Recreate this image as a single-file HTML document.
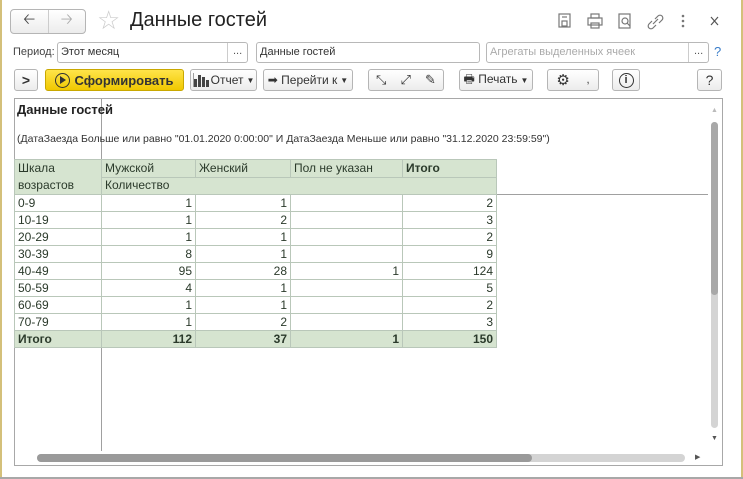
<!DOCTYPE html>
<html><head><meta charset="utf-8"><style>
*{box-sizing:border-box;margin:0;padding:0}
body{width:743px;height:479px;overflow:hidden;background:#fff;font-family:"Liberation Sans","DejaVu Sans",sans-serif;position:relative;color:#333}
.a{position:absolute}
.btn{position:absolute;height:22px;border:1px solid #b5b5b5;border-radius:3px;background:linear-gradient(#fff,#ececec);font-size:12px;color:#333;display:flex;align-items:center;justify-content:center;white-space:nowrap}
.inp{position:absolute;height:21px;border:1px solid #b8b8b8;border-radius:3px;background:#fff;font-size:11px;padding-left:3px;line-height:19px;color:#333}
table{border-collapse:collapse;position:absolute;left:14px;top:159px;font-size:12px}
td{border:1px solid #b9c7b9;height:17px;padding:0 3px;line-height:15px;color:#2b3a2b}
td.n{text-align:right}
.h td{background:#d6e4d0}
.t td{background:#d6e4d0;font-weight:bold}
</style></head><body>
<div class="a" style="left:0;top:0;width:2px;height:479px;background:#d4c07a"></div>
<div class="a" style="right:0;top:0;width:2px;height:479px;background:#d4c07a"></div>
<div class="a" style="left:0;top:477px;width:743px;height:2px;background:#a8a8a8"></div>

<div class="btn" style="left:10px;top:9px;width:76px;height:25px;border-radius:4px;justify-content:flex-start">
 <span style="width:37px;text-align:center;font-size:15px;color:#444">&#129120;</span>
 <span style="width:1px;height:23px;background:#ccc"></span>
 <span style="width:37px;text-align:center;font-size:15px;color:#aaa">&#129122;</span>
</div>
<div class="a" style="left:97px;top:5px;font-size:26px;color:#ccc">☆</div>
<div class="a" style="left:130px;top:9px;font-size:20px;color:#222">Данные гостей</div>
<svg class="a" style="left:555px;top:12px" width="180" height="18" fill="none" stroke="#777" stroke-width="1.2">
 <rect x="4" y="2" width="11" height="13"/><rect x="7" y="9" width="5" height="5"/><line x1="7" y1="5" x2="12" y2="5"/>
 <rect x="33" y="6" width="14" height="7"/><rect x="36" y="2" width="8" height="4"/><rect x="36" y="11" width="8" height="5"/>
 <rect x="64" y="2" width="11" height="14"/><circle cx="70" cy="9" r="3"/><line x1="72" y1="11" x2="75" y2="14"/>
 <path d="M97 9l-3 3a2.5 2.5 0 0 0 4 4l3-3M100 7l3-3a2.5 2.5 0 0 1 4 4l-3 3M98 12l5-5"/>
 <g fill="#777" stroke="none"><circle cx="128" cy="4" r="1.3"/><circle cx="128" cy="9" r="1.3"/><circle cx="128" cy="14" r="1.3"/></g>
 <path d="M156 5l7 8M163 5l-7 8" stroke="#555"/>
</svg>

<div class="a" style="left:13px;top:46px;font-size:11px;color:#444">Период:</div>
<div class="inp" style="left:57px;top:42px;width:191px">Этот месяц</div>
<div class="a" style="left:227px;top:43px;width:1px;height:19px;background:#ccc"></div>
<div class="a" style="left:233px;top:45px;font-size:11px;color:#555">...</div>
<div class="inp" style="left:256px;top:42px;width:224px">Данные гостей</div>
<div class="inp" style="left:486px;top:42px;width:223px;color:#aaa">Агрегаты выделенных ячеек</div>
<div class="a" style="left:688px;top:43px;width:1px;height:19px;background:#ccc"></div>
<div class="a" style="left:694px;top:45px;font-size:11px;color:#555">...</div>
<div class="a" style="left:714px;top:44px;font-size:13px;color:#3a7dc9">?</div>

<div class="btn" style="left:14px;top:69px;width:24px;font-weight:bold;font-size:14px">&gt;</div>
<div class="btn" style="left:45px;top:69px;width:139px;background:linear-gradient(#ffe44a,#f0c800);border-color:#c9a800;font-weight:bold;font-size:13px;color:#333">
 <span style="display:inline-block;width:15px;height:15px;border:1.5px solid #333;border-radius:50%;margin-right:4px;position:relative"><span style="position:absolute;left:4px;top:2.5px;border-left:6px solid #333;border-top:4px solid transparent;border-bottom:4px solid transparent"></span></span>Сформировать</div>
<div class="btn" style="left:190px;top:69px;width:67px"><svg width="18" height="14"><rect x="1" y="6" width="3" height="8" fill="#444"/><rect x="5" y="2" width="3" height="12" fill="#444"/><rect x="9" y="4" width="3" height="10" fill="#444"/><rect x="13" y="7" width="3" height="7" fill="#444"/><line x1="0" y1="0" x2="0" y2="14" stroke="#444"/></svg>Отчет <span style="font-size:8px;margin-left:3px">▼</span></div>
<div class="btn" style="left:263px;top:69px;width:90px">➡ Перейти к <span style="font-size:8px;margin-left:3px">▼</span></div>
<div class="btn" style="left:368px;top:69px;width:76px;justify-content:space-around;font-size:13px"><span>⤡</span><span>⤢</span><span>✎</span></div>
<div class="btn" style="left:459px;top:69px;width:74px">🖶 Печать <span style="font-size:8px;margin-left:3px">▼</span></div>
<div class="btn" style="left:547px;top:69px;width:52px;justify-content:space-around;font-size:15px"><span>⚙</span><span style="font-size:11px">,</span></div>
<div class="btn" style="left:612px;top:69px;width:28px"><span style="display:inline-block;width:15px;height:15px;border:1.3px solid #333;border-radius:50%;font-size:11px;line-height:13px;text-align:center;font-weight:bold">i</span></div>
<div class="btn" style="left:697px;top:69px;width:25px;font-size:14px">?</div>

<div class="a" style="left:14px;top:98px;width:709px;height:368px;border:1px solid #a8a8a8"></div>
<div class="a" style="left:101px;top:99px;width:1px;height:352px;background:#a0a0a0"></div>
<div class="a" style="left:15px;top:194px;width:693px;height:1px;background:#a0a0a0"></div>
<div class="a" style="left:17px;top:102px;font-size:13px;font-weight:bold;color:#222">Данные гостей</div>
<div class="a" style="left:17px;top:133px;font-size:10.5px;color:#333">(ДатаЗаезда Больше или равно "01.01.2020 0:00:00" И ДатаЗаезда Меньше или равно "31.12.2020 23:59:59")</div>

<table>
<tr class="h"><td rowspan="2" style="width:87px;vertical-align:top;line-height:17px">Шкала<br>возрастов</td><td style="width:94px">Мужской</td><td style="width:95px">Женский</td><td style="width:112px">Пол не указан</td><td style="width:94px;font-weight:bold">Итого</td></tr>
<tr class="h"><td colspan="4">Количество</td></tr>
<tr><td>0-9</td><td class="n">1</td><td class="n">1</td><td></td><td class="n">2</td></tr>
<tr><td>10-19</td><td class="n">1</td><td class="n">2</td><td></td><td class="n">3</td></tr>
<tr><td>20-29</td><td class="n">1</td><td class="n">1</td><td></td><td class="n">2</td></tr>
<tr><td>30-39</td><td class="n">8</td><td class="n">1</td><td></td><td class="n">9</td></tr>
<tr><td>40-49</td><td class="n">95</td><td class="n">28</td><td class="n">1</td><td class="n">124</td></tr>
<tr><td>50-59</td><td class="n">4</td><td class="n">1</td><td></td><td class="n">5</td></tr>
<tr><td>60-69</td><td class="n">1</td><td class="n">1</td><td></td><td class="n">2</td></tr>
<tr><td>70-79</td><td class="n">1</td><td class="n">2</td><td></td><td class="n">3</td></tr>
<tr class="t"><td>Итого</td><td class="n">112</td><td class="n">37</td><td class="n">1</td><td class="n">150</td></tr>
</table>

<div class="a" style="left:711px;top:107px;font-size:7px;color:#bbb">▲</div>
<div class="a" style="left:711px;top:122px;width:7px;height:306px;border-radius:4px;background:#d4d4d4"></div>
<div class="a" style="left:711px;top:122px;width:7px;height:173px;border-radius:4px;background:#a8a8a8"></div>
<div class="a" style="left:711px;top:435px;font-size:7px;color:#555">▼</div>
<div class="a" style="left:37px;top:454px;width:648px;height:8px;border-radius:4px;background:#d4d4d4"></div>
<div class="a" style="left:37px;top:454px;width:495px;height:8px;border-radius:4px;background:#9a9a9a"></div>
<div class="a" style="left:695px;top:453px;font-size:7px;color:#555">▶</div>
</body></html>
